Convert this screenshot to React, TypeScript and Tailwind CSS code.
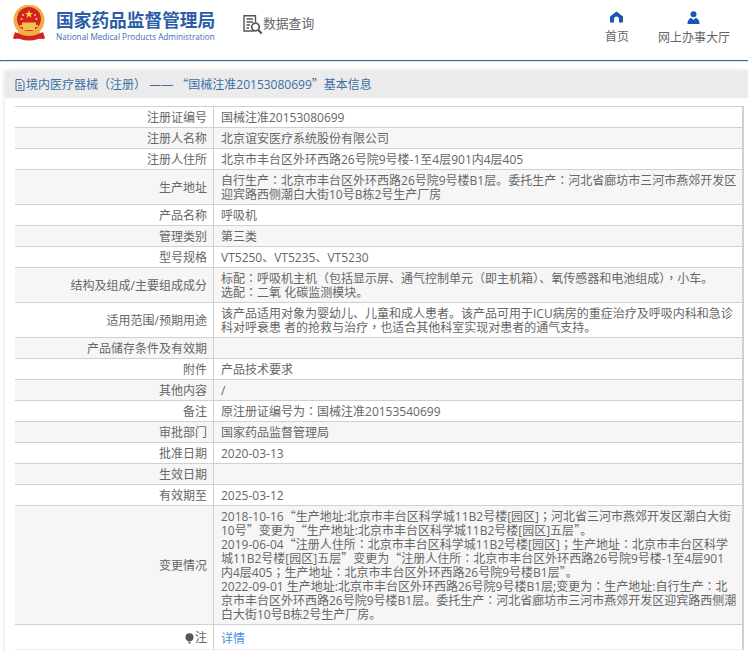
const rows: { label: string; lines: string[] }[] = [
  { label: '注册证编号', lines: ['国械注准20153080699'] },
  { label: '注册人名称', lines: ['北京谊安医疗系统股份有限公司'] },
  { label: '注册人住所', lines: ['北京市丰台区外环西路26号院9号楼-1至4层901内4层405'] },
  {
    label: '生产地址',
    lines: ['自行生产：北京市丰台区外环西路26号院9号楼B1层。委托生产：河北省廊坊市三河市燕郊开发区', '迎宾路西侧潮白大街10号B栋2号生产厂房'],
  },
  { label: '产品名称', lines: ['呼吸机'] },
  { label: '管理类别', lines: ['第三类'] },
  { label: '型号规格', lines: ['VT5250、VT5235、VT5230'] },
  {
    label: '结构及组成/主要组成成分',
    lines: ['标配：呼吸机主机（包括显示屏、通气控制单元（即主机箱）、氧传感器和电池组成），小车。', '选配：二氧 化碳监测模块。'],
  },
  {
    label: '适用范围/预期用途',
    lines: ['该产品适用对象为婴幼儿、儿童和成人患者。该产品可用于ICU病房的重症治疗及呼吸内科和急诊', '科对呼衰患 者的抢救与治疗，也适合其他科室实现对患者的通气支持。'],
  },
  { label: '产品储存条件及有效期', lines: ['\u00a0'] },
  { label: '附件', lines: ['产品技术要求'] },
  { label: '其他内容', lines: ['/'] },
  { label: '备注', lines: ['原注册证编号为：国械注准20153540699'] },
  { label: '审批部门', lines: ['国家药品监督管理局'] },
  { label: '批准日期', lines: ['2020-03-13'] },
  { label: '生效日期', lines: ['\u00a0'] },
  { label: '有效期至', lines: ['2025-03-12'] },
  {
    label: '变更情况',
    lines: [
      '2018-10-16“生产地址:北京市丰台区科学城11B2号楼[园区]；河北省三河市燕郊开发区潮白大街',
      '10号”变更为“生产地址:北京市丰台区科学城11B2号楼[园区]五层”。',
      '2019-06-04“注册人住所：北京市丰台区科学城11B2号楼[园区]；生产地址：北京市丰台区科学',
      '城11B2号楼[园区]五层”变更为“注册人住所：北京市丰台区外环西路26号院9号楼-1至4层901',
      '内4层405；生产地址：北京市丰台区外环西路26号院9号楼B1层”。',
      '2022-09-01 生产地址:北京市丰台区外环西路26号院9号楼B1层;变更为：生产地址:自行生产：北',
      '京市丰台区外环西路26号院9号楼B1层。委托生产：河北省廊坊市三河市燕郊开发区迎宾路西侧潮',
      '白大街10号B栋2号生产厂房。',
    ],
  },
];

// the reference centres these marks and draws its quotes full width
function Punct({ text }: { text: string }) {
  return (
    <>
      {text.split(/([：；，（）“”])/).map((part, i) => {
        if (part === '“' || part === '”') {
          return (
            <span key={i} className="font-['Noto_Sans_CJK_SC',sans-serif] leading-[0]">
              {part}
            </span>
          );
        }
        if (i % 2 === 1) {
          return (
            <span key={i} className="font-['Noto_Sans_CJK_TC',sans-serif] leading-[0]">
              {part}
            </span>
          );
        }
        return part;
      })}
    </>
  );
}

function Emblem() {
  return (
    <svg width="34" height="36" viewBox="0 0 34 36">
      <circle cx="17" cy="15" r="15.5" fill="#eeb044" />
      <circle cx="17" cy="14" r="12" fill="#d3231f" />
      <polygon points="17,5 18,8 21,8 18.6,9.8 19.5,12.8 17,11 14.5,12.8 15.4,9.8 13,8 16,8" fill="#f7d34a" />
      <circle cx="11" cy="10" r="1" fill="#f7d34a" />
      <circle cx="23" cy="10" r="1" fill="#f7d34a" />
      <circle cx="9.5" cy="14" r="1" fill="#f7d34a" />
      <circle cx="24.5" cy="14" r="1" fill="#f7d34a" />
      <path d="M8 20h18v2H8zM10 17.5h14v2.5H10zM11 22h12v3H11z" fill="#f2c14e" />
      <path d="M3 27c4 3 24 3 28 0l2 6c-2 2-5 0-7 1-6 2-12 2-18 0-2-1-5 1-7-1z" fill="#d3231f" />
      <path d="M7 25c5 4 15 4 20 0l1 3c-6 4-16 4-22 0z" fill="#eeb044" />
    </svg>
  );
}

function SearchDocIcon() {
  return (
    <svg width="21" height="21" viewBox="0 0 21 21" fill="none" stroke="#555" strokeWidth="1.4">
      <path d="M12 17H2V1.7h11.5V8" />
      <path d="M4.5 5h6.5M4.5 8h6.5M4.5 11h3.5M4.5 14h2.5" />
      <circle cx="13.5" cy="13" r="3.8" strokeWidth="1.7" />
      <path d="M16.3 16l3.4 3.6" strokeWidth="2.2" />
    </svg>
  );
}

function HomeIcon() {
  return (
    <svg width="13" height="12" viewBox="0 0 13 12">
      <path d="M6.5 0.5L13 5.5V11.5H9V8A2.5 2.5 0 0 0 4 8V11.5H0V5.5z" fill="#1a56b0" />
    </svg>
  );
}

function UserIcon() {
  return (
    <svg width="13" height="13" viewBox="0 0 13 13">
      <circle cx="6.5" cy="3.2" r="3" fill="#1a56b0" />
      <path d="M0.5 13C0.5 9.5 2.5 7 4.5 7L6.5 9L8.5 7C10.5 7 12.5 9.5 12.5 13z" fill="#1a56b0" />
    </svg>
  );
}

function FileIcon() {
  return (
    <svg width="10" height="12" viewBox="0 0 10 12" fill="none" stroke="#3a6aa8" strokeWidth="1">
      <path d="M1 .5h5.5L9 3v8.5H1z" />
      <path d="M3 4h3M3 6.5h4M3 9h4" />
    </svg>
  );
}

function BulbIcon() {
  return (
    <svg width="9" height="11" viewBox="0 0 9 11" className="mr-px">
      <circle cx="4.5" cy="4.2" r="4" fill="#555" />
      <path d="M3 8.5h3V10.5H3z" fill="#888" />
    </svg>
  );
}

export default function App() {
  return (
    <div className="h-[652px] overflow-hidden bg-white font-['Open_Sans','Noto_Sans_CJK_SC',sans-serif] text-[12px] text-[#666]">
      <header className="flex h-[60px] items-start">
        <div className="ml-[12px] mt-[5px]">
          <Emblem />
        </div>
        <div className="ml-[10px] mt-[9px] w-[162px]">
          <div className="text-[17.7px] font-bold leading-[22px] text-[#2b5ca6]">国家药品监督管理局</div>
          <div className="whitespace-nowrap text-[8.2px] leading-[11px] text-[#3b6cb0]">National Medical Products Administration</div>
        </div>
        <div className="ml-[24px] mt-[14px] flex items-start">
          <SearchDocIcon />
          <span className="text-[12.8px] leading-[18px] text-[#666]">数据查询</span>
        </div>
        <nav className="ml-auto mr-[18px] mt-[11px] flex gap-[29px]">
          <a className="flex flex-col items-center gap-[5px] leading-[18px]">
            <HomeIcon />
            首页
          </a>
          <a className="flex flex-col items-center gap-[5px] leading-[18px]">
            <UserIcon />
            网上办事大厅
          </a>
        </nav>
      </header>
      <div className="h-px bg-[#2a6aa8]" />
      <div className="h-px border-b border-dotted border-[#bcd2e2]" />

      <section className="ml-[5px] mt-[9px] bg-white shadow-[0_0_5px_#ddd]">
        <h2 className="flex h-[27px] items-center gap-[1px] bg-[#ebebeb] pl-[10px] text-[12px] font-normal text-[#3a6ea8]">
          <FileIcon />
          <span className="whitespace-pre">
            <Punct text="境内医疗器械（注册） —— “国械注准20153080699”基本信息" />
          </span>
        </h2>
        <div className="pb-[8px] pl-[10px] pr-[4px] pt-[8px]">
          <table className="w-full table-fixed border-separate border-spacing-0 border-r-2 border-t border-[#d0d0d0]">
            <colgroup>
              <col className="w-[199px]" />
              <col />
            </colgroup>
            <tbody>
              {rows.map((row, i) => (
                <tr key={row.label} className={i % 2 === 1 ? 'bg-[#f6f6f6]' : 'bg-white'}>
                  <td className="border-b border-r border-[#d0d0d0] pb-[2px] pr-[6px] pt-[4px] text-right leading-[14px]">{row.label}</td>
                  <td className="whitespace-nowrap border-b border-[#d0d0d0] pb-[2px] pl-[7px] pt-[4px] leading-[14px]">
                    {row.lines.map((line) => (
                      <div key={line}>
                        <Punct text={line} />
                      </div>
                    ))}
                  </td>
                </tr>
              ))}
              <tr className="bg-white">
                <td className="border-b border-r border-b-[#eee] border-r-[#d0d0d0] pb-[2px] pr-[6px] pt-[6px] text-right leading-[14px]">
                  <span className="inline-flex items-center justify-end">
                    <BulbIcon />注
                  </span>
                </td>
                <td className="border-b border-[#eee] pb-[2px] pl-[7px] pt-[6px] leading-[14px]">
                  <a className="text-[#4a90e2]">详情</a>
                </td>
              </tr>
            </tbody>
          </table>
        </div>
      </section>
    </div>
  );
}
